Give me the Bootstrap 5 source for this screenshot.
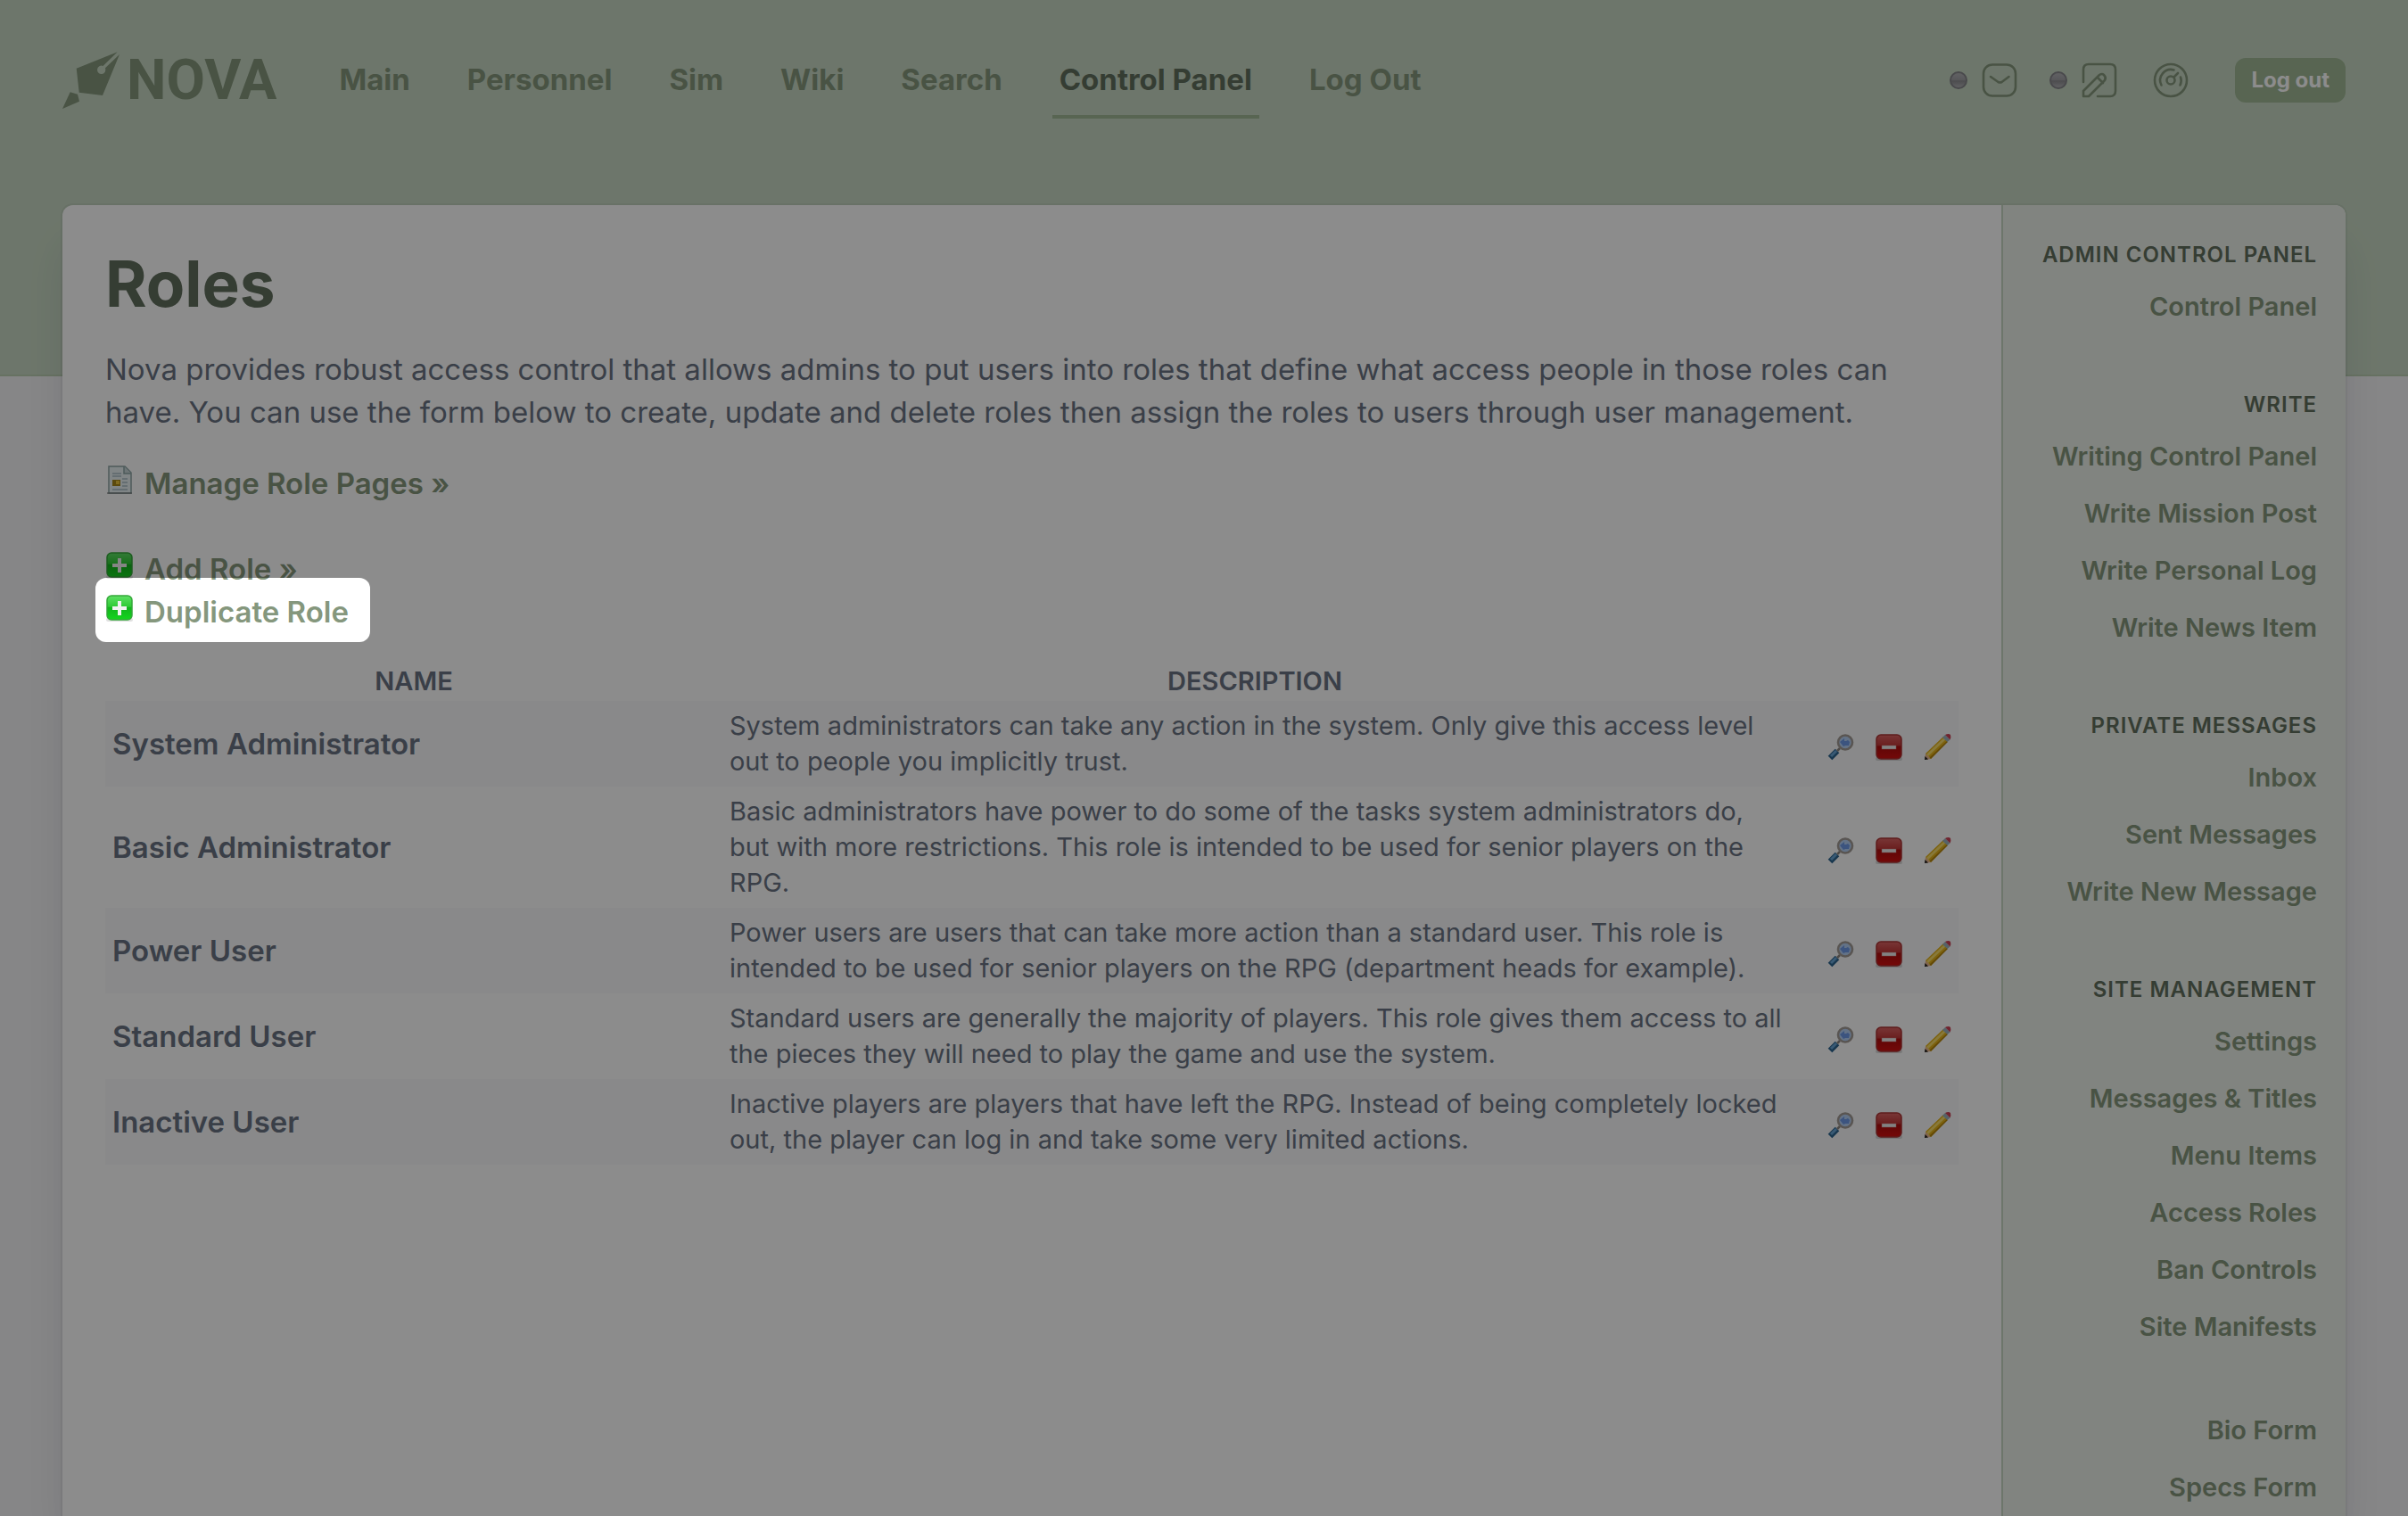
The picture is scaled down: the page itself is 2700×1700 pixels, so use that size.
<!DOCTYPE html>
<html lang="en">
<head>
<meta charset="utf-8">
<meta name="viewport" content="width=device-width, initial-scale=1">
<title>Roles – Nova</title>
<link href="https://cdn.jsdelivr.net/npm/bootstrap@5.3.0/dist/css/bootstrap.min.css" rel="stylesheet">
<style>
:root{--sage-100:#ecf0e9;--sage-200:#c7d8c3;--sage-300:#c3d3bd;--sage-500:#a0b895;--sage-600:#85977d;--sage-800:#626f5e;--ink:#6b7483}
body{font-family:Inter,"Liberation Sans",sans-serif;font-size:33px;line-height:48px;color:var(--ink);background:#f4f4f6;overflow-x:hidden}
a{text-decoration:none;color:var(--sage-600)}
svg{display:block;flex:none}
.gutter{padding-left:70px;padding-right:70px}
.top-band{background:var(--sage-200);border-bottom:2px solid #bccfb3;padding-top:46px;padding-bottom:286px}
.brand-logo{color:var(--sage-600);font:700 63px/88px Roboto,sans-serif;gap:8px;margin-right:62px}
.main-nav{gap:48px}
.main-nav .nav-link{padding:16px 8px 18px;border-bottom:4px solid transparent;border-top:4px solid transparent;font-weight:700;font-size:33px;line-height:44px;color:var(--sage-600)}
.main-nav .nav-link.active{color:var(--sage-800);border-bottom-color:var(--sage-500)}
.tool-links a{gap:16px}
.tool-links .with-dot{margin-right:36px}
.dot{width:20px;height:20px;border-radius:50%;border:2px solid #85858a;background:linear-gradient(#b0b0b4,#a2a2a6 45%,#8c8c90 55%,#b0b0b4)}
.btn-logout{background:var(--sage-500);color:#fff;font-weight:700;font-size:24px;line-height:34px;padding:8px 18px;border:0;border-radius:12px;margin-left:52px}
.sheet{background:#fff;border-radius:12px 12px 0 0;margin-top:-192px;box-shadow:0 0 0 2px rgba(17,24,39,.05),0 40px 50px -10px rgba(17,24,39,.14)}
.content-pane{padding:48px}
h1{font-size:71px;line-height:80px;font-weight:700;color:var(--sage-800);margin-bottom:32px}
.intro{margin-bottom:32px}
.act{gap:12px;font-weight:600}
.act svg{margin-top:-8px}
.spot{position:relative}
.spot::before{content:"";position:absolute;inset:-14px -24px -10px -11px;border-radius:12px;box-shadow:0 0 0 9999px rgba(0,0,0,.45);z-index:20;pointer-events:none}
.roles{--bs-table-bg:transparent;color:var(--ink);font-size:29px;line-height:40px;margin:28px 0 0;table-layout:fixed}
.roles th,.roles td{border:0;padding:8px;color:var(--ink);vertical-align:middle;box-shadow:none}
.roles td:nth-child(2){padding-right:2px}
.roles thead th{padding:6px 8px 2px;text-align:center;text-transform:uppercase;font-weight:600}
.roles tbody th{font-size:33px;font-weight:600}
.roles tbody tr:nth-child(odd){background:#f9fafb}
.roles td .tools{gap:22px;padding-top:8px}
.side{width:386px;background:var(--sage-100);border-left:2px solid #c7d8c3;border-top-right-radius:12px;padding:30px 32px 0;gap:52px;text-align:right}
.side h2{font-size:24px;line-height:52px;font-weight:600;color:var(--sage-800);text-transform:uppercase;letter-spacing:1px;margin:0;white-space:nowrap}
.side .nav-link{padding:12px 0;font-size:29px;line-height:40px;font-weight:600;color:var(--sage-600);white-space:nowrap}
</style>
<script src="https://cdn.jsdelivr.net/npm/bootstrap@5.3.0/dist/js/bootstrap.bundle.min.js"></script>
</head>
<body>
<svg width="0" height="0" class="position-absolute" aria-hidden="true">
  <defs>
    <linearGradient id="gGreen" x2="0" y2="1"><stop offset="0" stop-color="#5fe065"/><stop offset=".45" stop-color="#2fcb35"/><stop offset=".5" stop-color="#12b51c"/><stop offset="1" stop-color="#14d51f"/></linearGradient>
    <linearGradient id="gRed" x2="0" y2="1"><stop offset="0" stop-color="#dc6464"/><stop offset=".42" stop-color="#c33a3a"/><stop offset=".5" stop-color="#b00d0d"/><stop offset="1" stop-color="#d31010"/></linearGradient>
    <symbol id="plus" viewBox="0 0 32 32"><rect x="1" y="27" width="30" height="4" rx="2" fill="#000" opacity=".12"/><rect x="2" y="2" width="28" height="27" rx="5" fill="url(#gGreen)" stroke="#35a83a" stroke-width="1.5"/><path d="M14 8h4v6h6v4h-6v6h-4v-6H8v-4h6z" fill="#f2f2f2"/></symbol>
    <symbol id="minus" viewBox="0 0 32 32"><rect x="1" y="27" width="30" height="4" rx="2" fill="#000" opacity=".14"/><rect x="2" y="2" width="28" height="27" rx="5" fill="url(#gRed)" stroke="#a33" stroke-width="1.5"/><rect x="8" y="14" width="16" height="4" fill="#ededed" stroke="#c88" stroke-width=".5"/></symbol>
    <symbol id="lens" viewBox="0 0 32 32"><path d="M4 28l8-8" stroke="#2d648f" stroke-width="6.5"/><path d="M5 26l6-6" stroke="#68a5d5" stroke-width="3"/><path d="M12 20l3-3" stroke="#8d8580" stroke-width="2.5"/><circle cx="21" cy="10.500" r="8" fill="#b5d0f5" stroke="#a39c96" stroke-width="2.600"/><path d="M15 10l5-4v3h2l2-1 2 2-1 4h-4l-2 1z" fill="#6d99e8"/></symbol>
    <symbol id="pencil" viewBox="0 0 32 32"><path d="M2 30l1-7 6 6z" fill="#e9b58c"/><path d="M2 30l.5-4 3.500 3.500z" fill="#222"/><path d="M3 23L23 4l5 5L9 29z" fill="#e3b21b"/><path d="M4.500 23.500L24 5l2 2L6 26z" fill="#f7dc6a"/><path d="M7.500 27.500L27 9l1 1L9 29z" fill="#b5850c"/><path d="M22 5l3-3 5.500 5.500L27.500 10z" fill="#9db3bd"/><path d="M25 2q4-2 6 0 1 3-.5 5.500z" fill="#cc4055"/></symbol>
    <symbol id="page" viewBox="0 0 32 32"><path d="M4 1h18l7 7v23H4z" fill="#eaf2f4" stroke="#8da5a5" stroke-width="1.500"/><path d="M21 1v8h8" fill="#c6d6d8" stroke="#8da5a5" stroke-width="1.500"/><path d="M8 9h10M8 12h10M19 15h6M19 19h6M19 23h6M8 27h17" stroke="#a9bcc4" stroke-width="1.500"/><rect x="8" y="16" width="9" height="7" fill="#a6871b"/><rect x="12" y="17" width="4" height="4" fill="#e8c23a"/><path d="M2 31h28" stroke="#666" opacity=".5" stroke-width="2"/></symbol>
  </defs>
</svg>
<div class="d-flex flex-column min-vh-100">
  <header class="top-band gutter">
    <div class="d-flex align-items-center">
      <a href="#" class="brand-logo d-flex align-items-center">
        <svg width="64" height="64" viewBox="30 28 64 64" fill="currentColor" aria-hidden="true"><path d="M45.700 46.700L91.700 28.300 75.500 43.900A4.700 4.700 0 1 0 78 46.300L94 31 75 77 48.700 73.700z"/><path d="M38.700 73.300L47 75.700 49 83.700 30 92z"/></svg>
        <span>NOVA</span>
      </a>
      <nav class="main-nav nav flex-nowrap">
        <a class="nav-link" href="#">Main</a><a class="nav-link" href="#">Personnel</a><a class="nav-link" href="#">Sim</a><a class="nav-link" href="#">Wiki</a><a class="nav-link" href="#">Search</a><a class="nav-link active" aria-current="page" href="#">Control Panel</a><a class="nav-link" href="#">Log Out</a>
      </nav>
      <div class="tool-links d-flex align-items-center ms-auto">
        <a href="#" class="with-dot d-flex align-items-center" aria-label="Messages"><span class="dot"></span><svg width="40" height="40" viewBox="0 0 40 40" fill="none" stroke="currentColor" stroke-width="2.600" stroke-linecap="round" stroke-linejoin="round"><rect x="2" y="2.500" width="36" height="35" rx="10"/><path d="M10 16l8.500 6q2 1 4 0l8-6"/></svg></a>
        <a href="#" class="d-flex align-items-center" aria-label="Writing"><span class="dot"></span><svg width="40" height="40" viewBox="0 0 40 40" fill="none" stroke="currentColor" stroke-width="2.600" stroke-linecap="round" stroke-linejoin="round"><path d="M2 22V8q0-6 6-6h24q6 0 6 6v24q0 6-6 6H18"/><path d="M2 38v-6l18-18q3-2 5 0 3 3 1 6L8 38zM18 17l6 6"/></svg></a>
        <a href="#" class="ms-3 ps-4" aria-label="Dashboard"><svg width="40" height="40" viewBox="0 0 40 40" fill="none" stroke="currentColor" stroke-width="2.600" stroke-linecap="round"><circle cx="20" cy="20" r="18"/><circle cx="20" cy="20" r="4.500"/><path d="M23.500 16.500L28 12M9.500 25.500A12 12 0 0 1 23.500 8.500M31 16.500a12 12 0 0 1-.500 9"/></svg></a>
        <button type="button" class="btn btn-logout">Log out</button>
      </div>
    </div>
  </header>
  <div class="gutter flex-grow-1 d-flex">
    <div class="sheet d-flex flex-grow-1">
      <main class="content-pane flex-grow-1">
        <h1>Roles</h1>
        <p class="intro">Nova provides robust access control that allows admins to put users into roles that define what access people in those roles can have. You can use the form below to create, update and delete roles then assign the roles to users through user management.</p>
        <div class="d-flex mb-5"><a href="#" class="act d-flex align-items-center"><svg width="32" height="32"><use href="#page"/></svg>Manage Role Pages »</a></div>
        <div class="d-flex"><a href="#" class="act d-flex align-items-center"><svg width="32" height="32"><use href="#plus"/></svg>Add Role »</a></div>
        <div class="d-flex"><a href="#" class="act spot d-flex align-items-center"><svg width="32" height="32"><use href="#plus"/></svg>Duplicate Role</a></div>
        <table class="roles table">
          <colgroup><col style="width:33.300%"><col><col style="width:192px"></colgroup>
          <thead><tr><th scope="col">Name</th><th scope="col">Description</th><td></td></tr></thead>
          <tbody>
            <tr><th scope="row">System Administrator</th><td>System administrators can take any action in the system. Only give this access level out to people you implicitly trust.</td><td><div class="tools d-flex justify-content-end"><a href="#" aria-label="View"><svg width="32" height="32"><use href="#lens"/></svg></a><a href="#" aria-label="Delete"><svg width="32" height="32"><use href="#minus"/></svg></a><a href="#" aria-label="Edit"><svg width="32" height="32"><use href="#pencil"/></svg></a></div></td></tr>
            <tr><th scope="row">Basic Administrator</th><td>Basic administrators have power to do some of the tasks system administrators do, but with more restrictions. This role is intended to be used for senior players on the RPG.</td><td><div class="tools d-flex justify-content-end"><a href="#" aria-label="View"><svg width="32" height="32"><use href="#lens"/></svg></a><a href="#" aria-label="Delete"><svg width="32" height="32"><use href="#minus"/></svg></a><a href="#" aria-label="Edit"><svg width="32" height="32"><use href="#pencil"/></svg></a></div></td></tr>
            <tr><th scope="row">Power User</th><td>Power users are users that can take more action than a standard user. This role is intended to be used for senior players on the RPG (department heads for example).</td><td><div class="tools d-flex justify-content-end"><a href="#" aria-label="View"><svg width="32" height="32"><use href="#lens"/></svg></a><a href="#" aria-label="Delete"><svg width="32" height="32"><use href="#minus"/></svg></a><a href="#" aria-label="Edit"><svg width="32" height="32"><use href="#pencil"/></svg></a></div></td></tr>
            <tr><th scope="row">Standard User</th><td>Standard users are generally the majority of players. This role gives them access to all the pieces they will need to play the game and use the system.</td><td><div class="tools d-flex justify-content-end"><a href="#" aria-label="View"><svg width="32" height="32"><use href="#lens"/></svg></a><a href="#" aria-label="Delete"><svg width="32" height="32"><use href="#minus"/></svg></a><a href="#" aria-label="Edit"><svg width="32" height="32"><use href="#pencil"/></svg></a></div></td></tr>
            <tr><th scope="row">Inactive User</th><td>Inactive players are players that have left the RPG. Instead of being completely locked out, the player can log in and take some very limited actions.</td><td><div class="tools d-flex justify-content-end"><a href="#" aria-label="View"><svg width="32" height="32"><use href="#lens"/></svg></a><a href="#" aria-label="Delete"><svg width="32" height="32"><use href="#minus"/></svg></a><a href="#" aria-label="Edit"><svg width="32" height="32"><use href="#pencil"/></svg></a></div></td></tr>
          </tbody>
        </table>
      </main>
      <aside class="side d-flex flex-column flex-shrink-0">
        <nav class="nav flex-column"><h2>Admin Control Panel</h2><a class="nav-link" href="#">Control Panel</a></nav>
        <nav class="nav flex-column"><h2>Write</h2><a class="nav-link" href="#">Writing Control Panel</a><a class="nav-link" href="#">Write Mission Post</a><a class="nav-link" href="#">Write Personal Log</a><a class="nav-link" href="#">Write News Item</a></nav>
        <nav class="nav flex-column"><h2>Private Messages</h2><a class="nav-link" href="#">Inbox</a><a class="nav-link" href="#">Sent Messages</a><a class="nav-link" href="#">Write New Message</a></nav>
        <nav class="nav flex-column"><h2>Site Management</h2><a class="nav-link" href="#">Settings</a><a class="nav-link" href="#">Messages &amp; Titles</a><a class="nav-link" href="#">Menu Items</a><a class="nav-link" href="#">Access Roles</a><a class="nav-link" href="#">Ban Controls</a><a class="nav-link" href="#">Site Manifests</a></nav>
        <nav class="nav flex-column"><a class="nav-link" href="#">Bio Form</a><a class="nav-link" href="#">Specs Form</a></nav>
      </aside>
    </div>
  </div>
</div>
</body>
</html>
